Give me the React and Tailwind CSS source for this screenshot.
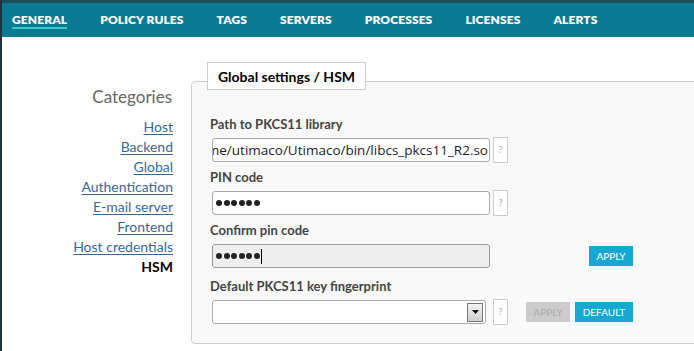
import React from 'react';

const tabs = ['General', 'Policy rules', 'Tags', 'Servers', 'Processes', 'Licenses', 'Alerts'];
const links = ['Host', 'Backend', 'Global', 'Authentication', 'E-mail server', 'Frontend', 'Host credentials'];

const Help = () => (
  <div className="ml-[3px] w-[15px] h-[26px] border border-[#ccc] bg-white flex items-center justify-center text-[9px] text-[#aaa]">?</div>
);

const Dots = () => (
  <div className="flex gap-[1.5px]">
    {[0, 1, 2, 3, 4, 5].map((i) => (
      <span key={i} className="w-[6px] h-[6px] rounded-full bg-[#222]" />
    ))}
  </div>
);

const Label = ({ children, className = '' }) => (
  <div className={`h-4 leading-4 text-[13px] font-bold text-[#444] ${className}`}>{children}</div>
);

export default function App() {
  return (
    <div className="w-[694px] h-[351px] overflow-hidden bg-white border-l-2 border-[#1c3440] font-['Lato',sans-serif]">
      <nav className="h-[37px] bg-[#097a91] border-t-[3px] border-[#1a4f5c] flex items-start pl-[10px] gap-[33px]">
        {tabs.map((t, i) => (
          <div key={t} className={`mt-[10px] text-[12px] leading-[14px] font-extrabold uppercase text-white tracking-[0.1px] ${i === 0 ? 'border-b-2 border-[#38cbc1]' : 'border-b-2 border-transparent'}`}>
            {t}
          </div>
        ))}
      </nav>

      <div className="flex">
        <aside className="w-[189px] pr-[18px] pt-[49px] text-right">
          <h2 className="text-[17px] leading-[22px] text-[#666] mb-[9px] pr-[1px]">Categories</h2>
          <ul className="flex flex-col">
            {links.map((l) => (
              <li key={l} className="h-5 leading-5 text-[14px]">
                <a className="text-[#3b6793] underline underline-offset-2 decoration-[#3b6793]">{l}</a>
              </li>
            ))}
            <li className="h-5 leading-5 text-[14px] font-bold text-black">HSM</li>
          </ul>
        </aside>

        <section className="flex-1 pt-[25px]">
          <div className="relative z-10 ml-[16px] w-[159px] h-[28px] bg-white border border-[#ccc] flex items-center justify-center text-[14px] font-bold text-black">
            Global settings / HSM
          </div>
          <div className="-mt-[9px] -mr-2 h-[263px] bg-[#f9f9f9] border border-[#ccc] rounded-l-[4px] pl-[18px] pt-[34px]">
            <Label>Path to PKCS11 library</Label>
            <div className="flex items-center mt-[5px] ml-[2px]">
              <div className="w-[278px] h-6 bg-white border border-[#aaa] rounded-[3px] flex justify-end items-center overflow-hidden whitespace-nowrap pr-[1px] text-[13.5px] text-[#222] font-['Open_Sans',sans-serif]">
                /home/utimaco/Utimaco/bin/libcs_pkcs11_R2.so
              </div>
              <Help />
            </div>

            <Label className="mt-[6px]">PIN code</Label>
            <div className="flex items-center mt-[5px] ml-[2px]">
              <div className="w-[278px] h-6 bg-white border border-[#aaa] rounded-[3px] flex items-center pl-[3px]">
                <Dots />
              </div>
              <Help />
            </div>

            <Label className="mt-[6px]">Confirm pin code</Label>
            <div className="flex items-center mt-[6px] ml-[2px]">
              <div className="w-[278px] h-6 bg-[#eee] border border-[#999] rounded-[3px] flex items-center pl-[3px]">
                <Dots />
                <span className="ml-[1px] w-px h-[15px] bg-black" />
              </div>
              <button className="ml-[99px] w-[44px] h-5 bg-[#17a8d1] text-white text-[10px] uppercase">Apply</button>
            </div>

            <Label className="mt-[10px]">Default PKCS11 key fingerprint</Label>
            <div className="flex items-center mt-[5px] ml-[2px]">
              <div className="w-[274px] h-6 bg-white border border-[#aaa] rounded-[3px] flex items-center justify-end pr-[2px]">
                <div className="w-[16px] h-[19px] border border-[#777] bg-gradient-to-b from-[#f4f4f4] to-[#cfcfcf] flex items-center justify-center">
                  <svg width="7" height="4" viewBox="0 0 7 4"><path d="M0 0h7L3.5 4z" fill="#111" /></svg>
                </div>
              </div>
              <div className="ml-[4px]"><Help /></div>
              <button className="ml-[18px] w-[44px] h-5 bg-[#ccc] text-[#aaa] text-[10px] uppercase">Apply</button>
              <button className="ml-[5px] w-[58px] h-5 bg-[#17a8d1] text-white text-[10px] uppercase">Default</button>
            </div>
          </div>
        </section>
      </div>
    </div>
  );
}
